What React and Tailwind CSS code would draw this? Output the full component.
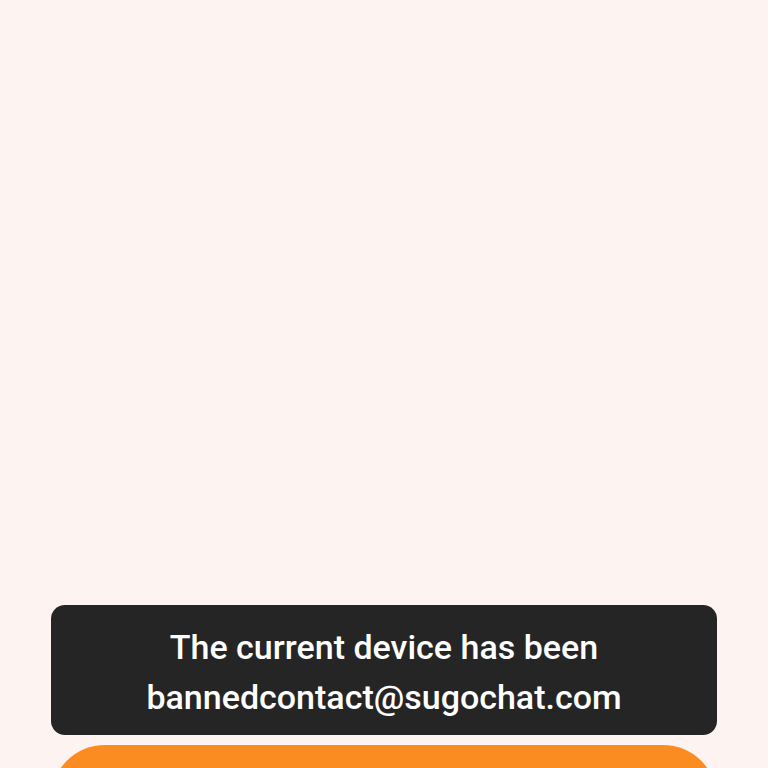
import React from 'react';

export default function App() {
  return (
    <div
      className="h-[768px] w-full overflow-hidden bg-[#fdf3f0] flex flex-col justify-end"
      style={{ fontFamily: 'Roboto, "Noto Sans", sans-serif' }}
    >
      <div className="px-[51px] pb-0 flex flex-col gap-[10px] translate-y-[85px]">
        {/* toast */}
        <div className="bg-[#252525] rounded-[14px] h-[130px] pt-[4px] flex flex-col items-center justify-center text-white text-[34px] leading-[50px] font-medium">
          <span>The current device has been</span>
          <span>bannedcontact@sugochat.com</span>
        </div>
        {/* action button, cut off at bottom */}
        <button className="h-[108px] rounded-full bg-[#fb8c21] w-full" />
      </div>
    </div>
  );
}
